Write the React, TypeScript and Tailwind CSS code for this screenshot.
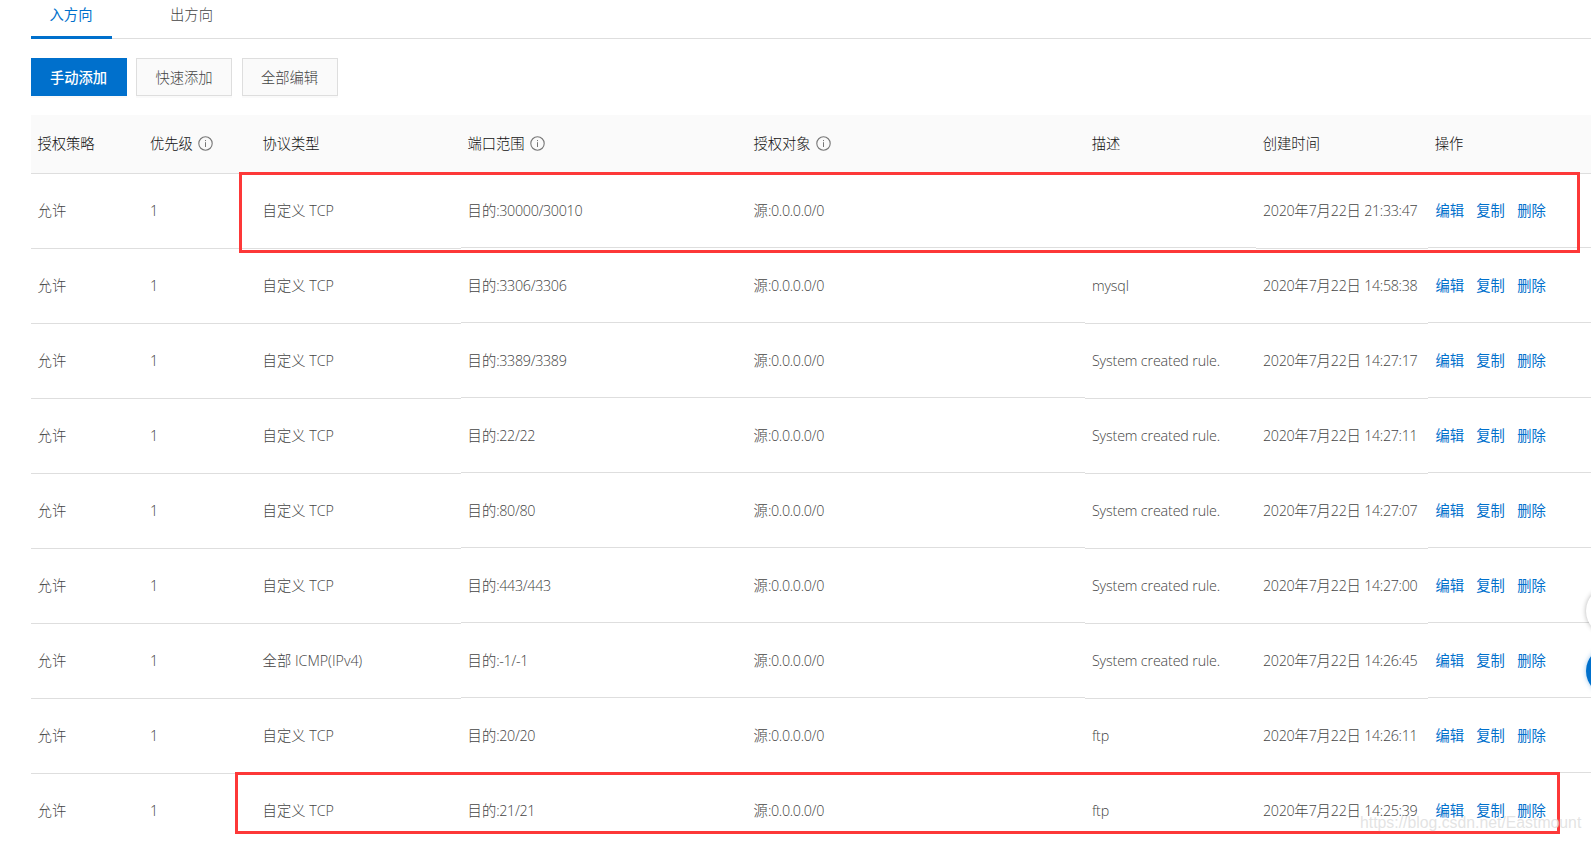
import { useState } from "react";
import clsx from "clsx";

// ── Security group rules ─────────────────────────────────────────────────────
const TABS = [
    { id: "in", label: "入方向" },
    { id: "out", label: "出方向" },
];

const COLUMNS = [
    { label: "授权策略" },
    { label: "优先级", hint: true },
    { label: "协议类型" },
    { label: "端口范围", hint: true },
    { label: "授权对象", hint: true },
    { label: "描述" },
    { label: "创建时间" },
    { label: "操作" },
];

const RULES = [
    { protocol: "自定义 TCP", port: "30000/30010", desc: "", time: "21:33:47" },
    { protocol: "自定义 TCP", port: "3306/3306", desc: "mysql", time: "14:58:38" },
    { protocol: "自定义 TCP", port: "3389/3389", desc: "System created rule.", time: "14:27:17" },
    { protocol: "自定义 TCP", port: "22/22", desc: "System created rule.", time: "14:27:11" },
    { protocol: "自定义 TCP", port: "80/80", desc: "System created rule.", time: "14:27:07" },
    { protocol: "自定义 TCP", port: "443/443", desc: "System created rule.", time: "14:27:00" },
    { protocol: "全部 ICMP(IPv4)", port: "-1/-1", desc: "System created rule.", time: "14:26:45" },
    { protocol: "自定义 TCP", port: "20/20", desc: "ftp", time: "14:26:11" },
    { protocol: "自定义 TCP", port: "21/21", desc: "ftp", time: "14:25:39" },
];

const GRID = "grid grid-cols-[112.5px_112.5px_205px_286px_338.4px_171px_172px_1fr] items-start";

// Numbers are set a little tighter than the text around them
function Mixed({ text }: { text: string }) {
    return (
        <span className="whitespace-pre">
            {text.split(/([\d:./\- ]*\d[\d:./\- ]*)/).filter(Boolean).map((part, i) =>
                /^[\d:./\- ]+$/.test(part) ? (
                    <span key={i} className="tracking-[-0.32px]">{part}</span>
                ) : (
                    part
                )
            )}
        </span>
    );
}

function InfoIcon() {
    return (
        <svg viewBox="0 0 15 15" className="mb-px ml-[5px] size-[15px] shrink-0" fill="none" stroke="#777">
            <circle cx="7.5" cy="7.5" r="6.7" strokeWidth="1.1" />
            <path d="M7.5 6.2v4.8M7.5 4v1.1" strokeWidth="1" />
        </svg>
    );
}

function Cell({ text, short, className }: { text: string; short?: boolean; className?: string }) {
    return (
        <div
            className={clsx(
                "flex items-center border-b border-[#dedede] pl-[6.6px]",
                short ? "h-[74px] pt-px" : "h-[75px]",
                className
            )}
        >
            <Mixed text={text} />
        </div>
    );
}

function RuleRow({ rule }: { rule: (typeof RULES)[number] }) {
    return (
        <div className={clsx(GRID, "h-[75px] text-[#444]")}>
            <Cell text="允许" />
            <Cell text="1" />
            <Cell text={rule.protocol} />
            <Cell text={`目的:${rule.port}`} short />
            <Cell text="源:0.0.0.0/0" short />
            <Cell text={rule.desc} short={!rule.desc} className="tracking-[-0.16px]" />
            <Cell text={`2020年7月22日 ${rule.time}`} />
            <div className="flex h-[74px] items-center gap-[12.3px] border-b border-[#dedede] pt-px pl-[7px] font-normal text-[#0070cc]">
                <a>编辑</a>
                <a>复制</a>
                <a>删除</a>
            </div>
        </div>
    );
}

export default function App() {
    const [activeTab, setActiveTab] = useState(TABS[0].id);

    return (
        <div className="relative h-[841px] w-[1591px] overflow-hidden bg-white font-['Open_Sans','Noto_Sans_CJK_SC',sans-serif] text-[14.3px] leading-5 font-light">
            <div className="pl-[31px]">
                {/* Tabs */}
                <div className="flex h-[39px] gap-[39px] shadow-[inset_0_-1px_0_#dedede]">
                    {TABS.map((tab) => (
                        <button
                            key={tab.id}
                            onClick={() => setActiveTab(tab.id)}
                            className={clsx(
                                "flex w-[81px] justify-center border-b-[3px] pt-[5px]",
                                activeTab === tab.id
                                    ? "border-[#0070cc] pr-px font-normal text-[#0070cc]"
                                    : "border-transparent text-[#444]"
                            )}
                        >
                            {tab.label}
                        </button>
                    ))}
                </div>

                {/* Toolbar */}
                <div className="mt-[19px] flex">
                    <button className="h-[38px] w-24 bg-[#0070cc] pt-px pr-px font-medium text-white shadow-[0_2px_0_#fafafa]">
                        手动添加
                    </button>
                    <button className="ml-[9px] h-[38px] w-24 border border-[#dedede] bg-[#fafafa] pt-px text-[#444] shadow-[0_2px_0_#fafafa]">
                        快速添加
                    </button>
                    <button className="ml-2.5 h-[38px] w-24 border border-[#dedede] bg-[#fafafa] pt-px pr-px text-[#444] shadow-[0_2px_0_#fafafa]">
                        全部编辑
                    </button>
                </div>

                {/* Rules table */}
                <div className={clsx(GRID, "mt-[19px] h-[59px] border-b border-[#dedede] bg-[#fafafa] text-[#111]")}>
                    {COLUMNS.map((col) => (
                        <div key={col.label} className="flex h-[58px] items-center pl-[6.4px]">
                            {col.label}
                            {col.hint && <InfoIcon />}
                        </div>
                    ))}
                </div>
                {RULES.map((rule) => (
                    <RuleRow key={rule.time} rule={rule} />
                ))}
            </div>

            {/* Floating help buttons, cut off by the right edge */}
            <div className="absolute top-[587px] left-[1586px] size-12 rounded-full bg-white shadow-[0_0_5px_rgba(0,0,0,0.3)]" />
            <div className="absolute top-[647px] left-[1586px] size-12 rounded-full bg-[#0070cc] shadow-[0_0_5px_rgba(0,112,204,0.4)]" />

            {/* Highlight frames */}
            <div className="absolute top-[172px] left-[239px] h-[81px] w-[1341px] border-[3px] border-[#fd3838]" />
            <div className="absolute top-[772px] left-[235px] h-[62px] w-[1325px] border-[3px] border-[#fd3838]" />

            {/* Watermark */}
            <div className="absolute top-[813px] left-[1360px] font-['Liberation_Sans',sans-serif] text-[15.8px] font-normal whitespace-nowrap text-[#dcdcdc]/80 [text-shadow:0_0_1px_rgba(255,255,255,0.6)]">
                https://blog.csdn.net/Eastmount
            </div>
        </div>
    );
}
